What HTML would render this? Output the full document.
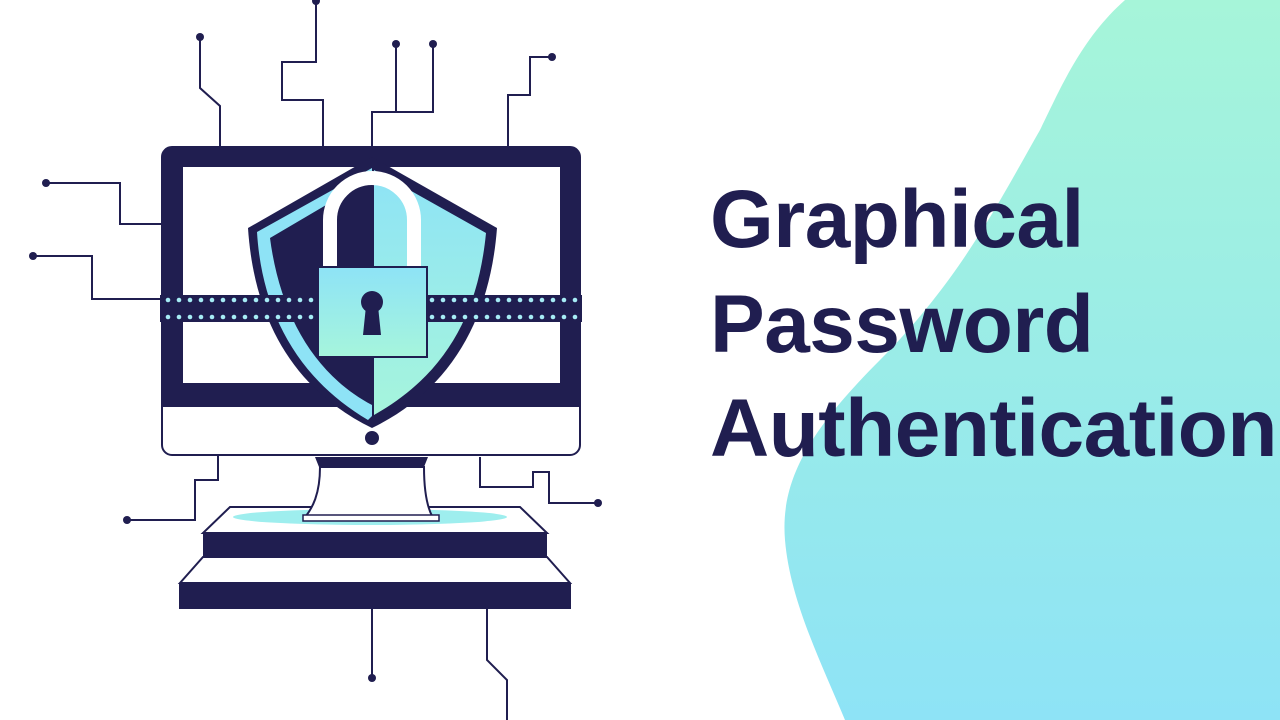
<!DOCTYPE html>
<html><head><meta charset="utf-8"><style>
html,body{margin:0;padding:0;background:#fff;}
body{width:1280px;height:720px;overflow:hidden;position:relative;}
svg{position:absolute;left:0;top:0;}
.t{position:absolute;left:710px;font-family:"Liberation Sans",sans-serif;font-weight:bold;font-size:82px;color:#201e50;line-height:1;white-space:nowrap;letter-spacing:-0.5px;}
</style></head><body>
<svg width="1280" height="720" viewBox="0 0 1280 720">
<defs>
<linearGradient id="bg" x1="0" y1="0" x2="0" y2="1">
<stop offset="0" stop-color="#a6f5d9"/><stop offset="1" stop-color="#8ee3f6"/></linearGradient>
<linearGradient id="cy" x1="0" y1="0" x2="0" y2="1">
<stop offset="0" stop-color="#8ee3f6"/><stop offset="1" stop-color="#a6f5dc"/></linearGradient>
</defs>
<path d="M1125 0 C1080 40 1060 90 1040 130 C1000 200 960 280 880 360 C810 430 780 480 785 540 C790 600 820 660 845 720 L1280 720 L1280 0 Z" fill="url(#bg)"/>
<g fill="none" stroke="#201e50" stroke-width="2">
<path d="M200 37V88L220 106V147"/>
<path d="M316 0V62H282V100H323V147"/>
<path d="M396 44V112M433 44V112H372V147"/>
<path d="M552 57H530V95H508V147"/>
<path d="M46 183H120V224H162"/>
<path d="M33 256H92V299H162"/>
<path d="M218 455V480H195V520H127"/>
<path d="M480 457V487H533V472H549V503H598"/>
<path d="M372 609V678"/>
<path d="M487 609V660L507 680V720"/>
</g>
<g fill="#201e50">
<circle cx="200" cy="37" r="4"/><circle cx="316" cy="1" r="4"/><circle cx="396" cy="44" r="4"/><circle cx="433" cy="44" r="4"/><circle cx="552" cy="57" r="4"/><circle cx="46" cy="183" r="4"/><circle cx="33" cy="256" r="4"/><circle cx="127" cy="520" r="4"/><circle cx="598" cy="503" r="4"/><circle cx="372" cy="678" r="4"/>
</g>
<rect x="162" y="147" width="418" height="308" rx="10" fill="#fff" stroke="#201e50" stroke-width="2"/>
<path d="M172 147H570A10 10 0 0 1 580 157V407H162V157A10 10 0 0 1 172 147Z" fill="#201e50"/>
<rect x="183" y="167" width="377" height="216" fill="#fff"/>
<circle cx="372" cy="438" r="7" fill="#201e50"/>
<path d="M372 157L497 228C490 320 450 390 372 428C294 390 254 320 248 228Z" fill="#201e50"/>
<path d="M372 168L257 232C262 315 300 380 368 420L372 416V405C315 375 280 315 270 238L372 178Z" fill="#8ee3f6"/>
<path d="M374 170L486 233C478 315 445 375 374 415Z" fill="url(#cy)"/>
<rect x="160" y="295" width="422" height="27" fill="#201e50"/>
<g fill="#a6ecf5">
<g id="r1"><circle cx="168" cy="300" r="2.3"/><circle cx="179" cy="300" r="2.3"/><circle cx="190" cy="300" r="2.3"/><circle cx="201" cy="300" r="2.3"/><circle cx="212" cy="300" r="2.3"/><circle cx="223" cy="300" r="2.3"/><circle cx="234" cy="300" r="2.3"/><circle cx="245" cy="300" r="2.3"/><circle cx="256" cy="300" r="2.3"/><circle cx="267" cy="300" r="2.3"/><circle cx="278" cy="300" r="2.3"/><circle cx="289" cy="300" r="2.3"/><circle cx="300" cy="300" r="2.3"/><circle cx="311" cy="300" r="2.3"/>
<circle cx="432" cy="300" r="2.3"/><circle cx="443" cy="300" r="2.3"/><circle cx="454" cy="300" r="2.3"/><circle cx="465" cy="300" r="2.3"/><circle cx="476" cy="300" r="2.3"/><circle cx="487" cy="300" r="2.3"/><circle cx="498" cy="300" r="2.3"/><circle cx="509" cy="300" r="2.3"/><circle cx="520" cy="300" r="2.3"/><circle cx="531" cy="300" r="2.3"/><circle cx="542" cy="300" r="2.3"/><circle cx="553" cy="300" r="2.3"/><circle cx="564" cy="300" r="2.3"/><circle cx="575" cy="300" r="2.3"/></g>
<use href="#r1" y="17"/>
</g>
<path d="M330 267V220A42 42 0 0 1 414 220V267" fill="none" stroke="#fff" stroke-width="14"/>
<rect x="318" y="267" width="109" height="90" fill="url(#cy)" stroke="#201e50" stroke-width="2"/>
<circle cx="372" cy="302" r="11" fill="#201e50"/>
<path d="M366 306L363 335H381L378 306Z" fill="#201e50"/>
<path d="M315 457H428L424 467H319Z" fill="#201e50"/>
<path d="M230 507H520L547 533H203Z" fill="#fff" stroke="#201e50" stroke-width="2"/>
<ellipse cx="370" cy="517" rx="137" ry="8" fill="#9eeeee"/>
<path d="M320 467H424C424 495 428 508 432 516H306C312 508 320 495 320 467Z" fill="#fff" stroke="#201e50" stroke-width="2"/>
<rect x="303" y="515" width="136" height="6" fill="#fff" stroke="#201e50" stroke-width="1.5"/>
<rect x="203" y="533" width="344" height="24" fill="#201e50"/>
<path d="M203 557H547L570 583H180Z" fill="#fff" stroke="#201e50" stroke-width="2"/>
<rect x="179" y="583" width="392" height="26" fill="#201e50"/>
</svg>
<div class="t" style="top:179px">Graphical</div>
<div class="t" style="top:284px">Password</div>
<div class="t" style="top:388px">Authentication</div>
</body></html>
